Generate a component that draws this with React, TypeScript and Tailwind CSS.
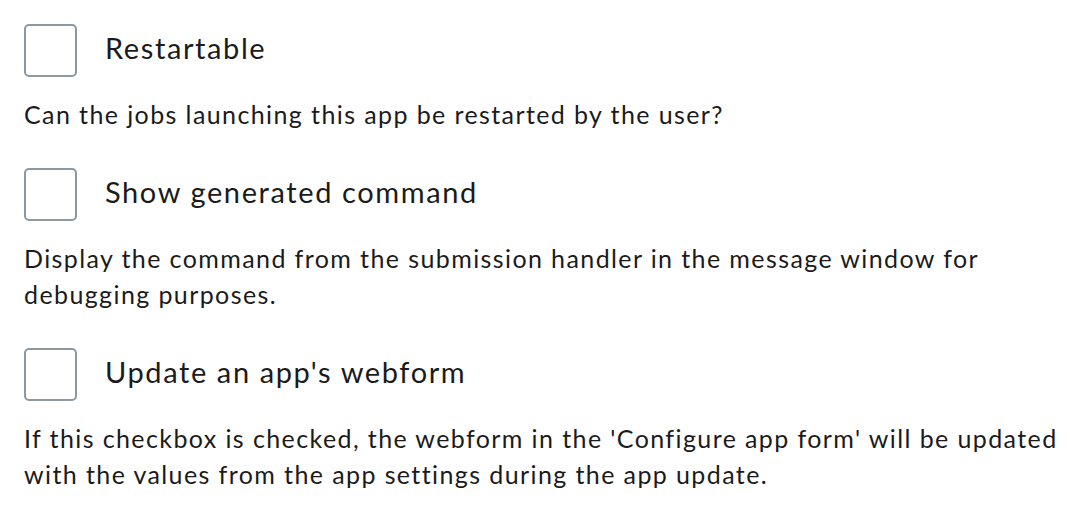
import { useState } from 'react'

type Option = { key: string; label: string; help: string }

const OPTIONS: Option[] = [
  { key: 'restartable', label: 'Restartable', help: 'Can the jobs launching this app be restarted by the user?' },
  {
    key: 'showCommand',
    label: 'Show generated command',
    help: 'Display the command from the submission handler in the message window for debugging purposes.',
  },
  {
    key: 'updateWebform',
    label: "Update an app's webform",
    help: "If this checkbox is checked, the webform in the 'Configure app form' will be updated with the values from the app settings during the app update.",
  },
]

export default function App() {
  const [checked, setChecked] = useState<Record<string, boolean>>({})

  return (
    <div className="min-h-screen bg-white pl-6 pt-6 pr-2 text-[#1b1b1b] font-['Lato','Open_Sans',sans-serif]">
      <div className="flex flex-col gap-9">
        {OPTIONS.map((o) => (
          <div key={o.key}>
            <label className="flex items-center gap-7 cursor-pointer">
              <input
                type="checkbox"
                checked={!!checked[o.key]}
                onChange={() => setChecked((c) => ({ ...c, [o.key]: !c[o.key] }))}
                className="appearance-none w-[53px] h-[53px] shrink-0 rounded-[5px] border-2 border-[#8c99a2] bg-white checked:bg-[#1b6ac9]"
              />
              <span className="text-[29px] leading-9 -mt-1.5 tracking-[1.6px]">{o.label}</span>
            </label>
            <p className="mt-[19px] text-[25px] leading-9 tracking-[1.4px]">{o.help}</p>
          </div>
        ))}
      </div>
    </div>
  )
}
